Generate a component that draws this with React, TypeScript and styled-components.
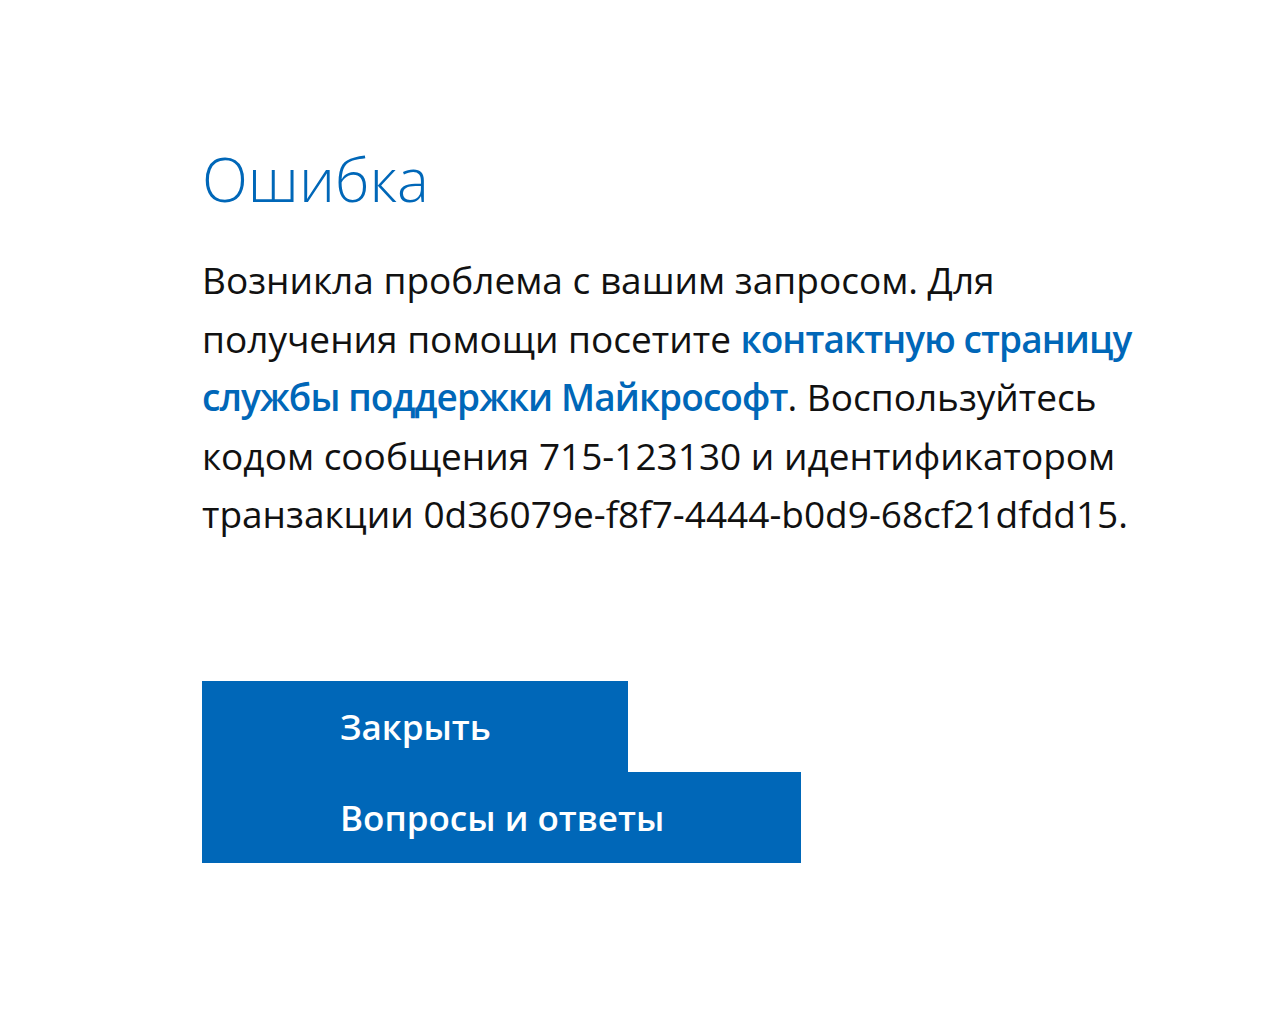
import React from "react";
import styled, { createGlobalStyle } from "styled-components";

const Global = createGlobalStyle`
  html, body { margin: 0; padding: 0; background: #fff; }
  body { font-family: "Open Sans", "Noto Sans", "Liberation Sans", sans-serif; }
`;

const Page = styled.main`
  padding: 137px 0 0 202px;
  display: flex;
  flex-direction: column;
  align-items: flex-start;
`;

const Title = styled.h1`
  margin: 0;
  font-weight: 300;
  font-size: 60px;
  line-height: 84px;
  color: #0067b8;
`;

const Message = styled.p`
  margin: 30px 0 0;
  font-size: 37px;
  line-height: 58.5px;
  color: #111;
  white-space: nowrap;
`;

const Link = styled.a`
  color: #0067b8;
  font-weight: 600;
  letter-spacing: -0.9px;
  text-decoration: none;
`;

const Actions = styled.div`
  margin-top: 137px;
  display: flex;
  flex-direction: column;
  align-items: flex-start;
`;

const Button = styled.button`
  height: 91px;
  padding: 0 137px 0 138px;
  border: 0;
  background: #0067b8;
  color: #fff;
  font-family: inherit;
  font-weight: 600;
  font-size: 35px;
  cursor: pointer;
`;

export default function App() {
  return (
    <>
      <Global />
      <Page>
        <Title>Ошибка</Title>
        <Message>
          Возникла проблема с вашим запросом. Для
          <br />
          получения помощи посетите <Link href="#">контактную страницу</Link>
          <br />
          <Link href="#">службы поддержки Майкрософт</Link>. Воспользуйтесь
          <br />
          кодом сообщения 715-123130 и идентификатором
          <br />
          транзакции 0d36079e-f8f7-4444-b0d9-68cf21dfdd15.
        </Message>
        <Actions>
          <Button>Закрыть</Button>
          <Button>Вопросы и ответы</Button>
        </Actions>
      </Page>
    </>
  );
}
